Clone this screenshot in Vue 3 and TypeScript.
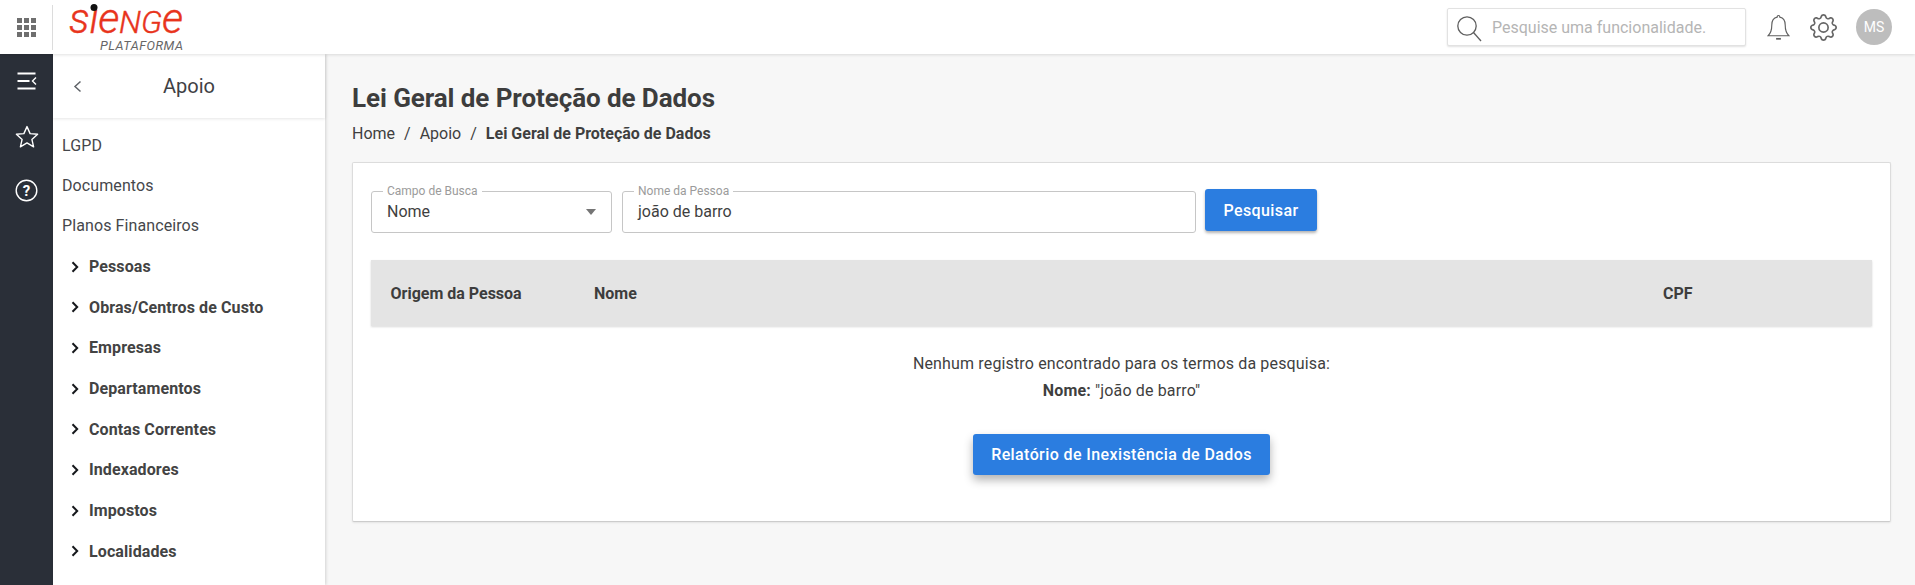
<script setup lang="ts">
const plainItems: string[] = ['LGPD', 'Documentos', 'Planos Financeiros']
const groupItems: string[] = ['Pessoas', 'Obras/Centros de Custo', 'Empresas', 'Departamentos', 'Contas Correntes', 'Indexadores', 'Impostos', 'Localidades']
</script>

<template>
  <div class="page">
    <header class="topbar">
      <button class="apps" aria-label="Aplicativos">
        <svg width="19" height="19" viewBox="0 0 19 19" fill="#6f6f6f">
          <rect x="0" y="0" width="5" height="5" /><rect x="7" y="0" width="5" height="5" /><rect x="14" y="0" width="5" height="5" />
          <rect x="0" y="7" width="5" height="5" /><rect x="7" y="7" width="5" height="5" /><rect x="14" y="7" width="5" height="5" />
          <rect x="0" y="14" width="5" height="5" /><rect x="7" y="14" width="5" height="5" /><rect x="14" y="14" width="5" height="5" />
        </svg>
      </button>
      <svg class="logo" width="130" height="54" viewBox="0 0 130 54">
        <text x="1" y="33" class="logo-word" textLength="114" lengthAdjust="spacing">sıe<tspan class="logo-cap">NG</tspan>e</text>
        <circle cx="26" cy="7.5" r="3.5" fill="#111" />
        <text x="32" y="50" class="logo-sub" textLength="83" lengthAdjust="spacing">PLATAFORMA</text>
      </svg>
      <div class="top-right">
        <div class="search">
          <svg width="26" height="30" viewBox="0 0 26 30" fill="none" stroke="#5f5f5f" stroke-width="1.3">
            <circle cx="11" cy="12" r="9.2" />
            <path d="M17.5 18.5 L25 27" />
          </svg>
          <span class="search-text">Pesquise uma funcionalidade.</span>
        </div>
        <svg class="bell" width="23" height="27" viewBox="0 0 24 28" fill="none" stroke="#5f5f5f" stroke-width="1.2">
          <path d="M12 1.5 C12.9 1.5 13.4 2.2 13.4 3.2 C17.6 4 19 7.5 19 11.5 C19 16 20 20 22.8 22.6 H1.2 C4 20 5 16 5 11.5 C5 7.5 6.4 4 10.6 3.2 C10.6 2.2 11.1 1.5 12 1.5 Z" />
          <path d="M9.5 25.8 H14.5" stroke-width="1.8" />
        </svg>
        <svg class="gear" width="27" height="27" viewBox="0 0 16 16" fill="#666">
          <path d="M8 4.754a3.246 3.246 0 1 0 0 6.492 3.246 3.246 0 0 0 0-6.492zM5.754 8a2.246 2.246 0 1 1 4.492 0 2.246 2.246 0 0 1-4.492 0z" />
          <path d="M9.796 1.343c-.527-1.79-3.065-1.79-3.592 0l-.094.319a.873.873 0 0 1-1.255.52l-.292-.16c-1.64-.892-3.433.902-2.54 2.541l.159.292a.873.873 0 0 1-.52 1.255l-.319.094c-1.79.527-1.79 3.065 0 3.592l.319.094a.873.873 0 0 1 .52 1.255l-.16.292c-.892 1.64.901 3.434 2.541 2.54l.292-.159a.873.873 0 0 1 1.255.52l.094.319c.527 1.79 3.065 1.79 3.592 0l.094-.319a.873.873 0 0 1 1.255-.52l.292.16c1.64.893 3.434-.902 2.54-2.541l-.159-.292a.873.873 0 0 1 .52-1.255l.319-.094c1.79-.527 1.79-3.065 0-3.592l-.319-.094a.873.873 0 0 1-.52-1.255l.16-.292c.893-1.64-.902-3.433-2.541-2.54l-.292.159a.873.873 0 0 1-1.255-.52l-.094-.319zm-2.633.283c.246-.835 1.428-.835 1.674 0l.094.319a1.873 1.873 0 0 0 2.693 1.115l.291-.16c.764-.415 1.6.42 1.184 1.185l-.159.292a1.873 1.873 0 0 0 1.116 2.692l.318.094c.835.246.835 1.428 0 1.674l-.319.094a1.873 1.873 0 0 0-1.115 2.693l.16.291c.415.764-.42 1.6-1.185 1.184l-.291-.159a1.873 1.873 0 0 0-2.693 1.116l-.094.318c-.246.835-1.428.835-1.674 0l-.094-.319a1.873 1.873 0 0 0-2.692-1.115l-.292.16c-.764.415-1.6-.42-1.184-1.185l.159-.291A1.873 1.873 0 0 0 1.945 8.93l-.319-.094c-.835-.246-.835-1.428 0-1.674l.319-.094A1.873 1.873 0 0 0 3.06 4.377l-.16-.292c-.415-.764.42-1.6 1.185-1.184l.292.159a1.873 1.873 0 0 0 2.692-1.115l.094-.319z" />
        </svg>
        <div class="avatar">MS</div>
      </div>
    </header>

    <div class="body">
      <nav class="rail">
        <svg width="20" height="18" viewBox="0 0 20 18" fill="none" stroke="#fff" stroke-width="2">
          <path d="M0.5 1.5 H18.5 M0.5 9 H12.5 M0.5 16.5 H18.5" />
          <path d="M19 5.5 L15.5 9 L19 12.5" stroke-width="1.4" />
        </svg>
        <svg class="rail-star" width="24" height="23" viewBox="0 0 24 23" fill="none" stroke="#fff" stroke-width="1.4" stroke-linejoin="round">
          <path d="M12 1.6 L15.1 8.6 L22.6 9.3 L16.9 14.4 L18.6 21.8 L12 17.9 L5.4 21.8 L7.1 14.4 L1.4 9.3 L8.9 8.6 Z" />
        </svg>
        <svg class="rail-help" width="23" height="23" viewBox="0 0 23 23" fill="none">
          <circle cx="11.5" cy="11.5" r="10.3" stroke="#fff" stroke-width="1.4" />
          <text x="11.5" y="16.6" text-anchor="middle" fill="#fff" class="help-mark">?</text>
        </svg>
      </nav>

      <aside class="side">
        <div class="side-head">
          <svg class="back" width="9" height="13" viewBox="0 0 9 13" fill="none" stroke="#5f6368" stroke-width="1.5">
            <path d="M7.5 1.5 L2 6.5 L7.5 11.5" />
          </svg>
          <span class="side-title">Apoio</span>
        </div>
        <ul class="side-list">
          <li v-for="item in plainItems" :key="item" class="side-row plain">{{ item }}</li>
          <li v-for="item in groupItems" :key="item" class="side-row group">
            <svg width="8" height="12" viewBox="0 0 8 12" fill="none" stroke="#16181c" stroke-width="2">
              <path d="M1.5 1.2 L6.2 6 L1.5 10.8" />
            </svg>
            <span>{{ item }}</span>
          </li>
        </ul>
      </aside>

      <main class="content">
        <h1 class="title">Lei Geral de Proteção de Dados</h1>
        <div class="crumbs">
          <span>Home</span><span class="sep">/</span><span>Apoio</span><span class="sep">/</span><strong>Lei Geral de Proteção de Dados</strong>
        </div>

        <section class="card">
          <div class="filters">
            <div class="field field-select">
              <span class="legend">Campo de Busca</span>
              <span class="value">Nome</span>
              <span class="caret"></span>
            </div>
            <div class="field field-input">
              <span class="legend">Nome da Pessoa</span>
              <span class="value">joão de barro</span>
            </div>
            <button class="btn btn-search">Pesquisar</button>
          </div>

          <div class="thead">
            <span class="th th-origin">Origem da Pessoa</span>
            <span class="th th-name">Nome</span>
            <span class="th th-cpf">CPF</span>
          </div>

          <div class="empty">
            <p>Nenhum registro encontrado para os termos da pesquisa:</p>
            <p class="empty-term"><strong>Nome:</strong> "joão de barro"</p>
            <button class="btn btn-report">Relatório de Inexistência de Dados</button>
          </div>
        </section>
      </main>
    </div>
  </div>
</template>

<style>
html, body { margin: 0; padding: 0; background: #f7f7f7; }
</style>

<style scoped>
.page {
  width: 1915px;
  height: 585px;
  overflow: hidden;
  display: flex;
  flex-direction: column;
  font-family: Roboto, "Liberation Sans", sans-serif;
  color: #3f3f3f;
  background: #f7f7f7;
}
.topbar {
  height: 54px;
  flex: none;
  display: flex;
  align-items: center;
  background: #fff;
  box-shadow: 0 1px 3px rgba(0, 0, 0, 0.12);
  position: relative;
  z-index: 3;
}
.apps {
  width: 53px;
  height: 45px;
  padding: 0;
  border: 0;
  border-right: 1px solid #dcdcdc;
  background: none;
  display: flex;
  align-items: center;
  justify-content: center;
}
.logo {
  margin-left: 15px;
  flex: none;
}
.logo-word {
  font-family: Roboto, sans-serif;
  font-style: italic;
  font-size: 42px;
  font-weight: 300;
  fill: #e8341c;
  stroke: #e8341c;
  stroke-width: 0.4px;
}
.logo-cap { font-size: 32px; }
.logo-sub {
  font-family: Roboto, sans-serif;
  font-size: 12.7px;
  font-style: italic;
  fill: #666;
}
.top-right {
  margin-left: auto;
  display: flex;
  align-items: center;
}
.search {
  width: 299px;
  height: 38px;
  box-sizing: border-box;
  background: #fff;
  border: 1px solid #e2e2e2;
  border-radius: 2px;
  box-shadow: 0 1px 2px rgba(0, 0, 0, 0.12);
  display: flex;
  align-items: center;
  padding: 3px 0 0 8px;
}
.search-text {
  margin-left: 10px;
  margin-top: -3px;
  font-size: 16px;
  color: #b5b5b5;
}
.bell { margin-left: 21px; }
.gear { margin-left: 20px; }
.avatar {
  width: 36px;
  height: 36px;
  margin: 0 23px 0 19px;
  border-radius: 50%;
  background: #bdbdbd;
  color: #fff;
  font-size: 14px;
  display: flex;
  align-items: center;
  justify-content: center;
}
.body {
  flex: 1;
  display: flex;
  min-height: 0;
}
.rail {
  width: 53px;
  flex: none;
  background: #2a2f38;
  display: flex;
  flex-direction: column;
  align-items: center;
  padding-top: 18px;
  box-sizing: border-box;
}
.rail-star { margin-top: 35px; }
.rail-help { margin-top: 31px; }
.help-mark { font: 700 15px Roboto, sans-serif; }
.side {
  width: 272px;
  flex: none;
  background: #fff;
  box-shadow: 1px 0 3px rgba(0, 0, 0, 0.15);
  position: relative;
  z-index: 2;
}
.side-head {
  height: 64px;
  position: relative;
  display: flex;
  align-items: center;
  justify-content: center;
  box-shadow: 0 1px 3px rgba(0, 0, 0, 0.1);
}
.back {
  position: absolute;
  left: 20px;
  top: 26px;
}
.side-title {
  font-size: 20px;
  color: #3f4145;
}
.side-list {
  list-style: none;
  margin: 0;
  padding: 7.6px 0 0;
}
.side-row {
  display: flex;
  align-items: center;
  font-size: 16px;
  letter-spacing: 0.1px;
  box-sizing: border-box;
}
.plain {
  height: 40px;
  padding-left: 9px;
  color: #45474b;
}
.plain:nth-child(3) { margin-bottom: 0.8px; }
.group {
  height: 40.65px;
  padding-left: 18px;
  font-weight: 700;
  color: #434343;
}
.group svg { margin-right: 10px; flex: none; }
.content {
  flex: 1;
  min-width: 0;
  padding: 0 24px 0 27px;
}
.title {
  margin: 28px 0 0;
  font-size: 26px;
  line-height: 32px;
  font-weight: 700;
  letter-spacing: -0.08px;
  color: #3d3d3d;
}
.crumbs {
  margin-top: 11px;
  font-size: 16px;
  line-height: 18px;
  color: #3f3f3f;
}
.sep { margin: 0 9px; }
.crumbs strong { font-weight: 700; }
.card {
  margin-top: 19px;
  height: 360px;
  box-sizing: border-box;
  background: #fff;
  border: 1px solid #dcdcdc;
  border-bottom-color: #ccc;
  border-radius: 2px;
  padding: 26px 18px 0;
  box-shadow: 0 1px 2px rgba(0, 0, 0, 0.08);
}
.filters {
  display: flex;
  align-items: flex-start;
  height: 71px;
}
.field {
  position: relative;
  height: 42px;
  margin-top: 2px;
  box-sizing: border-box;
  border: 1px solid #c6c6c6;
  border-radius: 3px;
  display: flex;
  align-items: center;
}
.field-select { width: 241px; margin-right: 10px; }
.field-input { width: 574px; margin-right: 9px; }
.legend {
  position: absolute;
  left: 11px;
  top: -7px;
  padding: 0 4px;
  background: #fff;
  font-size: 12px;
  line-height: 12px;
  color: #9b9b9b;
}
.value {
  margin: -2px 0 0 15px;
  font-size: 16px;
  color: #3f3f3f;
}
.caret {
  position: absolute;
  right: 15px;
  top: 17px;
  border-left: 5.5px solid transparent;
  border-right: 5.5px solid transparent;
  border-top: 6px solid #757575;
}
.btn {
  border: 0;
  border-radius: 3px;
  background: #2b7de0;
  color: #fff;
  font-family: Roboto, sans-serif;
  font-weight: 500;
  letter-spacing: 0.4px;
}
.btn-search {
  width: 112px;
  height: 42px;
  font-size: 16px;
  box-shadow: 0 2px 3px rgba(0, 0, 0, 0.3);
}
.thead {
  height: 66px;
  background: #e4e4e4;
  box-shadow: 0 1px 2px rgba(0, 0, 0, 0.15);
  display: flex;
  align-items: center;
  font-size: 16px;
  font-weight: 700;
  color: #3d3d3d;
}
.th-origin { width: 223px; padding-left: 19.5px; box-sizing: border-box; }
.th-name { width: 1069px; }
.empty {
  text-align: center;
  font-size: 16px;
  letter-spacing: 0.15px;
  color: #3f3f3f;
  padding-top: 25px;
}
.empty p {
  margin: 0;
  line-height: 26px;
}
.empty .empty-term { margin-top: 1px; }
.empty strong { font-weight: 700; }
.btn-report {
  display: block;
  margin: 30px auto 0;
  width: 297px;
  height: 41px;
  font-size: 16px;
  box-shadow: 0 5px 10px rgba(0, 0, 0, 0.3);
}
</style>
